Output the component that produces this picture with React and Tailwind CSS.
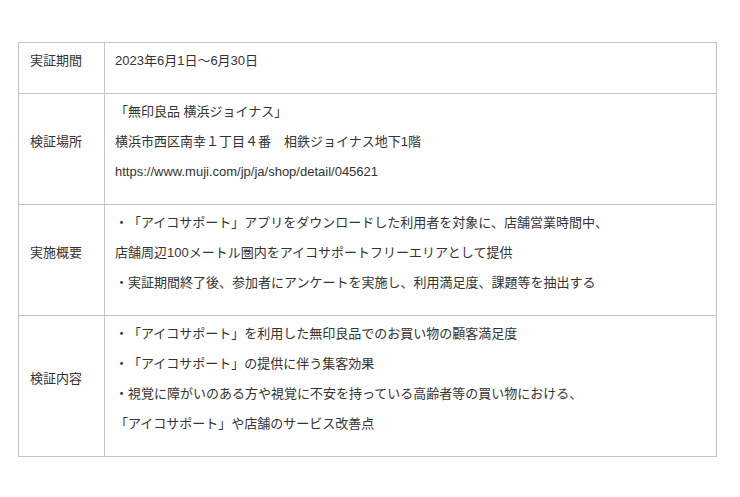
export default function App() {
  const rows = [
    { label: "実証期間", lines: ["2023年6月1日〜6月30日"] },
    {
      label: "検証場所",
      lines: [
        "「無印良品 横浜ジョイナス」",
        "横浜市西区南幸１丁目４番　相鉄ジョイナス地下1階",
        "https://www.muji.com/jp/ja/shop/detail/045621",
      ],
    },
    {
      label: "実施概要",
      lines: [
        "・「アイコサポート」アプリをダウンロードした利用者を対象に、店舗営業時間中、",
        "店舗周辺100メートル圏内をアイコサポートフリーエリアとして提供",
        "・実証期間終了後、参加者にアンケートを実施し、利用満足度、課題等を抽出する",
      ],
    },
    {
      label: "検証内容",
      lines: [
        "・「アイコサポート」を利用した無印良品でのお買い物の顧客満足度",
        "・「アイコサポート」の提供に伴う集客効果",
        "・視覚に障がいのある方や視覚に不安を持っている高齢者等の買い物における、",
        "「アイコサポート」や店舗のサービス改善点",
      ],
    },
  ];
  return (
    <div className="w-[740px] h-[497px] bg-white pt-[42px] pl-[18px] text-[13px] text-[#333] [text-spacing-trim:space-all] font-['Liberation_Sans','Noto_Sans_CJK_JP',sans-serif]">
      <div className="w-[699px] border border-[#c4c4c4]">
        {rows.map((r, i) => (
          <div
            key={i}
            className={`flex ${i > 0 ? "border-t border-[#c4c4c4]" : ""}`}
          >
            <div
              className={`w-[86px] shrink-0 border-r border-[#c4c4c4] flex pl-[11px] pt-[8px] pb-[22px] leading-[20px] ${
                i === 0 ? "items-start" : "items-center"
              }`}
            >
              <span>{r.label}</span>
            </div>
            <div className="flex-1 flex flex-col gap-[10px] pt-[8px] pb-[22px] pl-[10px] leading-[20px]">
              {r.lines.map((l, j) => (
                <div key={j} className="whitespace-nowrap">{l}</div>
              ))}
            </div>
          </div>
        ))}
      </div>
    </div>
  );
}
